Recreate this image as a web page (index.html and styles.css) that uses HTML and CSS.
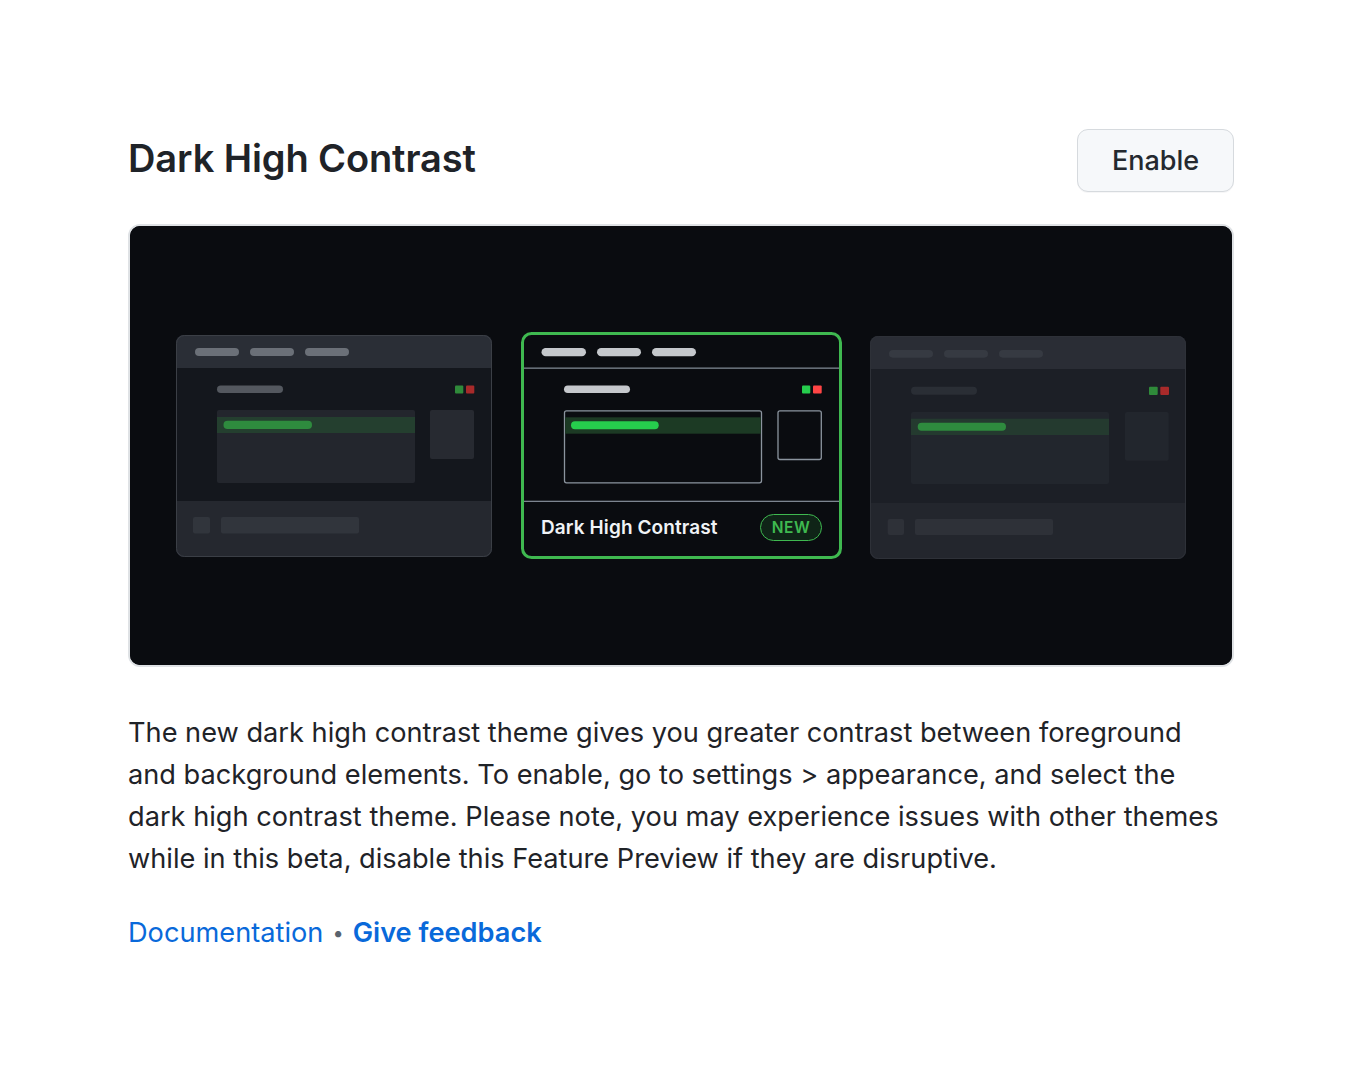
FILE: index.html
```html
<!DOCTYPE html>
<html lang="en">
<head>
<meta charset="utf-8">
<title>Dark High Contrast</title>
<link rel="stylesheet" href="styles.css">
</head>
<body>
<main class="preview">
  <header class="preview-head">
    <h2 class="preview-title">Dark High Contrast</h2>
    <button class="btn" type="button">Enable</button>
  </header>

  <div class="illustration">
    <svg class="illustration-svg" width="1102" height="439" viewBox="0 0 1102 439" xmlns="http://www.w3.org/2000/svg">
      <rect width="1102" height="439" fill="#0a0c10"/>

      <!-- Left card (dark) -->
      <g transform="translate(46 109)">
        <clipPath id="cl"><rect x="0" y="0" width="316" height="222" rx="8"/></clipPath>
        <g clip-path="url(#cl)">
          <rect width="316" height="222" fill="#14171d"/>
          <rect width="316" height="33" fill="#2a2e36"/>
          <rect y="166" width="316" height="56" fill="#25282f"/>
        </g>
        <rect x="0.5" y="0.5" width="315" height="221" rx="8" fill="none" stroke="#3b3f46"/>
        <rect x="19" y="13" width="44" height="8" rx="4" fill="#6b7078"/>
        <rect x="74" y="13" width="44" height="8" rx="4" fill="#6b7078"/>
        <rect x="129" y="13" width="44" height="8" rx="4" fill="#6b7078"/>
        <rect x="41" y="50.5" width="66" height="7.5" rx="3.75" fill="#54585f"/>
        <rect x="279" y="50.5" width="8.3" height="8" rx="1" fill="#2f8a3a"/>
        <rect x="290" y="50.5" width="8.3" height="8" rx="1" fill="#a82a2a"/>
        <rect x="41" y="75" width="198" height="73" rx="2" fill="#23262d"/>
        <rect x="41" y="82" width="198" height="16" fill="#243f2f"/>
        <rect x="47.5" y="85.8" width="88.5" height="8.3" rx="4.1" fill="#2e8b3e"/>
        <rect x="254" y="75" width="44" height="49" rx="2" fill="#272a31"/>
        <rect x="17" y="182" width="17" height="16.5" rx="2" fill="#31353c"/>
        <rect x="45" y="182" width="138" height="16.5" rx="2" fill="#31353c"/>
      </g>

      <!-- Middle card (dark high contrast, selected) -->
      <g transform="translate(391 106)">
        <rect x="1.5" y="1.5" width="318" height="224" rx="9" fill="#0a0c10" stroke="#3fb950" stroke-width="3"/>
        <rect x="3" y="35.5" width="315" height="1.3" fill="#7d8590"/>
        <rect x="3" y="168.7" width="315" height="1.3" fill="#7d8590"/>
        <rect x="20.5" y="16" width="44.5" height="8.3" rx="4.15" fill="#c5c8cc"/>
        <rect x="76" y="16" width="44" height="8.3" rx="4.15" fill="#c5c8cc"/>
        <rect x="131" y="16" width="44" height="8.3" rx="4.15" fill="#c5c8cc"/>
        <rect x="43" y="53.5" width="66" height="7.6" rx="3.8" fill="#c5c8cc"/>
        <rect x="281" y="53.5" width="8.3" height="8" rx="1" fill="#26cd4d"/>
        <rect x="292" y="53.5" width="8.7" height="8" rx="1" fill="#ff4545"/>
        <rect x="43.5" y="78.8" width="197" height="72" rx="2" fill="none" stroke="#8b949e" stroke-width="1.3"/>
        <rect x="44.2" y="85.3" width="195.6" height="16.4" fill="#1c3a24"/>
        <rect x="50" y="89.3" width="87.7" height="8" rx="4" fill="#26cd4d"/>
        <rect x="257" y="78.8" width="43.3" height="48.7" rx="2" fill="none" stroke="#8b949e" stroke-width="1.3"/>
      </g>

      <!-- Right card (dark dimmed) -->
      <g transform="translate(740 110)">
        <clipPath id="cr"><rect x="0" y="0" width="316" height="223" rx="8"/></clipPath>
        <g clip-path="url(#cr)">
          <rect width="316" height="223" fill="#1c1f26"/>
          <rect width="316" height="33" fill="#2a2d35"/>
          <rect y="167" width="316" height="56" fill="#23262d"/>
        </g>
        <rect x="0.5" y="0.5" width="315" height="222" rx="8" fill="none" stroke="#2e3138"/>
        <rect x="19" y="14" width="44" height="7.7" rx="3.85" fill="#363a42"/>
        <rect x="74" y="14" width="44" height="7.7" rx="3.85" fill="#363a42"/>
        <rect x="129" y="14" width="44" height="7.7" rx="3.85" fill="#363a42"/>
        <rect x="41" y="50.7" width="66" height="8" rx="4" fill="#2a2e35"/>
        <rect x="279" y="50.7" width="8.7" height="8.3" rx="1" fill="#2f8a3a"/>
        <rect x="290.3" y="50.7" width="8.7" height="8.3" rx="1" fill="#a82a2a"/>
        <rect x="41" y="76" width="198" height="72" rx="2" fill="#22262d"/>
        <rect x="41" y="82.7" width="198" height="16.3" fill="#243a2f"/>
        <rect x="47.7" y="86.7" width="88.3" height="8" rx="4" fill="#2e8b3e"/>
        <rect x="255" y="76" width="43.7" height="48.7" rx="2" fill="#22262d"/>
        <rect x="17.7" y="183" width="16.3" height="16" rx="2" fill="#2e3138"/>
        <rect x="45" y="183" width="138" height="16" rx="2" fill="#2e3138"/>
      </g>
    </svg>
    <div class="card-foot">
      <span class="card-foot-title">Dark High Contrast</span>
      <span class="badge-new">NEW</span>
    </div>
  </div>

  <p class="preview-text">The new dark high contrast theme gives you greater contrast between foreground and background elements. To enable, go to settings &gt; appearance, and select the dark high contrast theme. Please note, you may experience issues with other themes while in this beta, disable this Feature Preview if they are disruptive.</p>

  <p class="preview-links">
    <a class="link" href="#">Documentation</a>
    <span class="dot">•</span>
    <a class="link link-strong" href="#">Give feedback</a>
  </p>
</main>
</body>
</html>
```

FILE: styles.css
```css
* {
  box-sizing: border-box;
}

html, body {
  margin: 0;
  padding: 0;
  background: #ffffff;
}

body {
  font-family: Inter, "Noto Sans", "Liberation Sans", sans-serif;
  color: #1f2328;
}

.preview {
  width: 1106px;
  margin-left: 128px;
  padding-top: 128px;
}

.preview-head {
  display: flex;
  align-items: center;
  justify-content: space-between;
  height: 64px;
}

.preview-title {
  margin: 0;
  font-size: 38px;
  font-weight: 600;
  letter-spacing: -0.1px;
  color: #1f2328;
  line-height: 1;
  margin-top: -4px;
}

.btn {
  width: 157px;
  height: 63px;
  border: 1.5px solid #d6dade;
  border-radius: 11px;
  background: #f6f8fa;
  color: #24292f;
  font-family: inherit;
  font-size: 27px;
  font-weight: 500;
  box-shadow: 0 1px 0 rgba(31, 35, 40, 0.04);
  padding: 0;
}

.illustration {
  position: relative;
  margin-top: 32px;
  width: 1106px;
  border: 2px solid #dfe2e5;
  border-radius: 12px;
  overflow: hidden;
  background: #0a0c10;
}

.illustration-svg {
  display: block;
}

.card-foot {
  position: absolute;
  left: 411px;
  top: 287px;
  width: 281px;
  height: 28px;
  display: flex;
  align-items: center;
  justify-content: space-between;
}

.card-foot-title {
  font-size: 19px;
  font-weight: 600;
  color: #f0f3f6;
  letter-spacing: 0.1px;
}

.badge-new {
  display: inline-flex;
  align-items: center;
  justify-content: center;
  width: 62px;
  height: 27px;
  border: 1.5px solid #3fb950;
  border-radius: 14px;
  background: #0f2417;
  color: #3fb950;
  font-size: 15.5px;
  font-weight: 600;
  letter-spacing: 0.5px;
}

.preview-text {
  margin: 45px 0 0;
  font-size: 27.2px;
  line-height: 42px;
  color: #1f2328;
  width: 1100px;
}

.preview-links {
  margin: 32px 0 0;
  font-size: 27.2px;
  line-height: 42px;
  display: flex;
  align-items: center;
  gap: 9px;
}

.link {
  color: #0969da;
  text-decoration: none;
}

.link-strong {
  font-weight: 600;
}

.dot {
  color: #59636e;
  font-size: 20px;
}
```
